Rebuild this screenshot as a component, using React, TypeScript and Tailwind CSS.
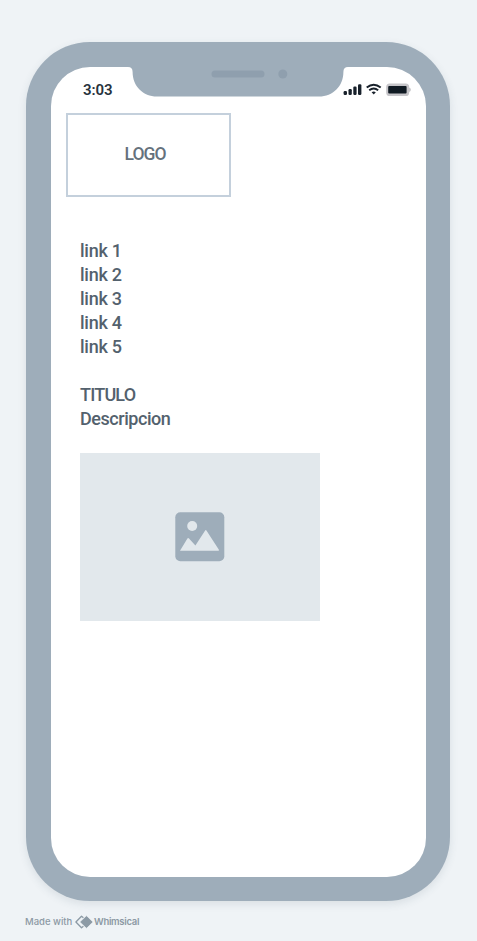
import React from 'react';

const links = ['link 1', 'link 2', 'link 3', 'link 4', 'link 5'];

function Notch() {
  return (
    <svg className="absolute left-[77px] -top-px" width="221" height="31" viewBox="128 66 221 31">
      <path d="M128 66V67Q132.6 67 132.6 72C132.6 86 143 96.5 157 96.5H319C333 96.5 343.4 86 343.4 72Q343.4 67 348 67V66Z" fill="#9eadba" />
      <rect x="211.5" y="70.5" width="53" height="7" rx="3.5" fill="#8f9fae" />
      <circle cx="282.8" cy="74" r="4.5" fill="#8f9fae" />
    </svg>
  );
}

function StatusIcons() {
  return (
    <svg width="70" height="16" viewBox="342 82 70 16">
      <g fill="#18212b">
        <rect x="343.6" y="91" width="3.4" height="4" rx="1.2" />
        <rect x="348.5" y="89" width="3.3" height="6" rx="1.2" />
        <rect x="353.3" y="86.6" width="3.3" height="8.4" rx="1.2" />
        <rect x="358" y="84.2" width="3.4" height="10.8" rx="1.2" />
        <path d="M371.6 92.2Q373.7 90.9 375.8 92.2L373.7 94.4Z" />
      </g>
      <g fill="none" stroke="#18212b" strokeWidth="1.9">
        <path d="M366.7 87.6Q373.7 81.7 380.7 87.6" />
        <path d="M369.2 90.2Q373.7 86.7 378.2 90.2" />
      </g>
      <rect x="386.8" y="84" width="21.8" height="11.4" rx="3" fill="#c6c5c9" stroke="#c6c5c9" strokeWidth="1.2" />
      <rect x="388.2" y="86" width="18.4" height="7.4" rx="1" fill="#101a23" />
      <path d="M409.6 87.9Q411.2 89.7 409.6 91.5Z" fill="#c6c5c9" stroke="#c6c5c9" />
    </svg>
  );
}

function ImageIcon() {
  return (
    <svg width="50" height="50" viewBox="0 0 50 50">
      <rect x=".3" y=".3" width="49" height="49" rx="5" fill="#9eadba" />
      <circle cx="17.2" cy="14" r="5" fill="#e2e8ec" />
      <path d="M5 38.8L12.4 26.5Q13.2 25.5 14 26.5L20.4 33.5L30 18.7Q30.8 17.5 31.6 18.7L43.9 37.8Q44.3 38.8 43.3 38.8Z" fill="#e2e8ec" />
    </svg>
  );
}

export default function App() {
  return (
    <div className="h-[941px] w-[477px] overflow-hidden bg-[#eff3f6] pt-[42px] font-['Roboto',sans-serif]">
      <div className="ml-[26px] h-[859px] w-[424px] rounded-[64px] bg-[#9eadba] pl-[25px] pt-[25px] shadow-[0_3px_8px_rgba(60,80,100,0.12)]">
        <main className="relative h-[810px] w-[375px] rounded-[39px] bg-white text-[18px] leading-6 text-[#53616d]">
          <Notch />
          <div className="flex h-[46px] justify-between pl-[32px] pr-[14px] pt-[14px]">
            <span className="text-[15px] font-semibold leading-[18px] tracking-[-0.1px] text-[#28333e]">3:03</span>
            <div className="pt-px">
              <StatusIcons />
            </div>
          </div>
          <div className="ml-[15px] flex h-[84px] w-[165px] items-center justify-center border-2 border-[#c4d0dc] pb-[2px] pr-[7px]">
            <span className="text-[17.5px] font-medium tracking-[-1px] text-[#65717c]">LOGO</span>
          </div>
          <nav className="ml-[29px] mt-[42px] font-medium">
            {links.map((link) => (
              <div key={link} className="tracking-[-0.25px]">{link}</div>
            ))}
          </nav>
          <section className="ml-[29px] mt-6">
            <h1 className="font-medium tracking-[-0.8px]">TITULO</h1>
            <p className="font-medium tracking-[-0.45px]">Descripcion</p>
            <div className="-ml-[0.5px] mt-[22px] flex h-[168px] w-[240px] items-center justify-center bg-[#e2e8ec]">
              <ImageIcon />
            </div>
          </section>
        </main>
      </div>
      <footer className="ml-[25px] mt-[14px] flex h-[14px] items-center font-['Inter',sans-serif] text-[9.5px] text-[#8c99a4]">
        <span className="w-[50px] whitespace-nowrap pt-px font-medium">Made with</span>
        <svg width="18" height="14" viewBox="0 0 18 14">
          <path d="M11.5 1.4L17.2 7L11.5 12.6L5.7 7Z" fill="#8c9aa5" stroke="#8c9aa5" strokeLinejoin="round" />
          <path d="M8.4 2.8L6.5 1.2L.9 7L6.5 12.8L8.4 11.2" fill="none" stroke="#8c9aa5" strokeWidth="1.3" strokeLinejoin="round" />
        </svg>
        <span className="ml-[1px] pt-px font-semibold tracking-[-0.3px]">Whimsical</span>
      </footer>
    </div>
  );
}
